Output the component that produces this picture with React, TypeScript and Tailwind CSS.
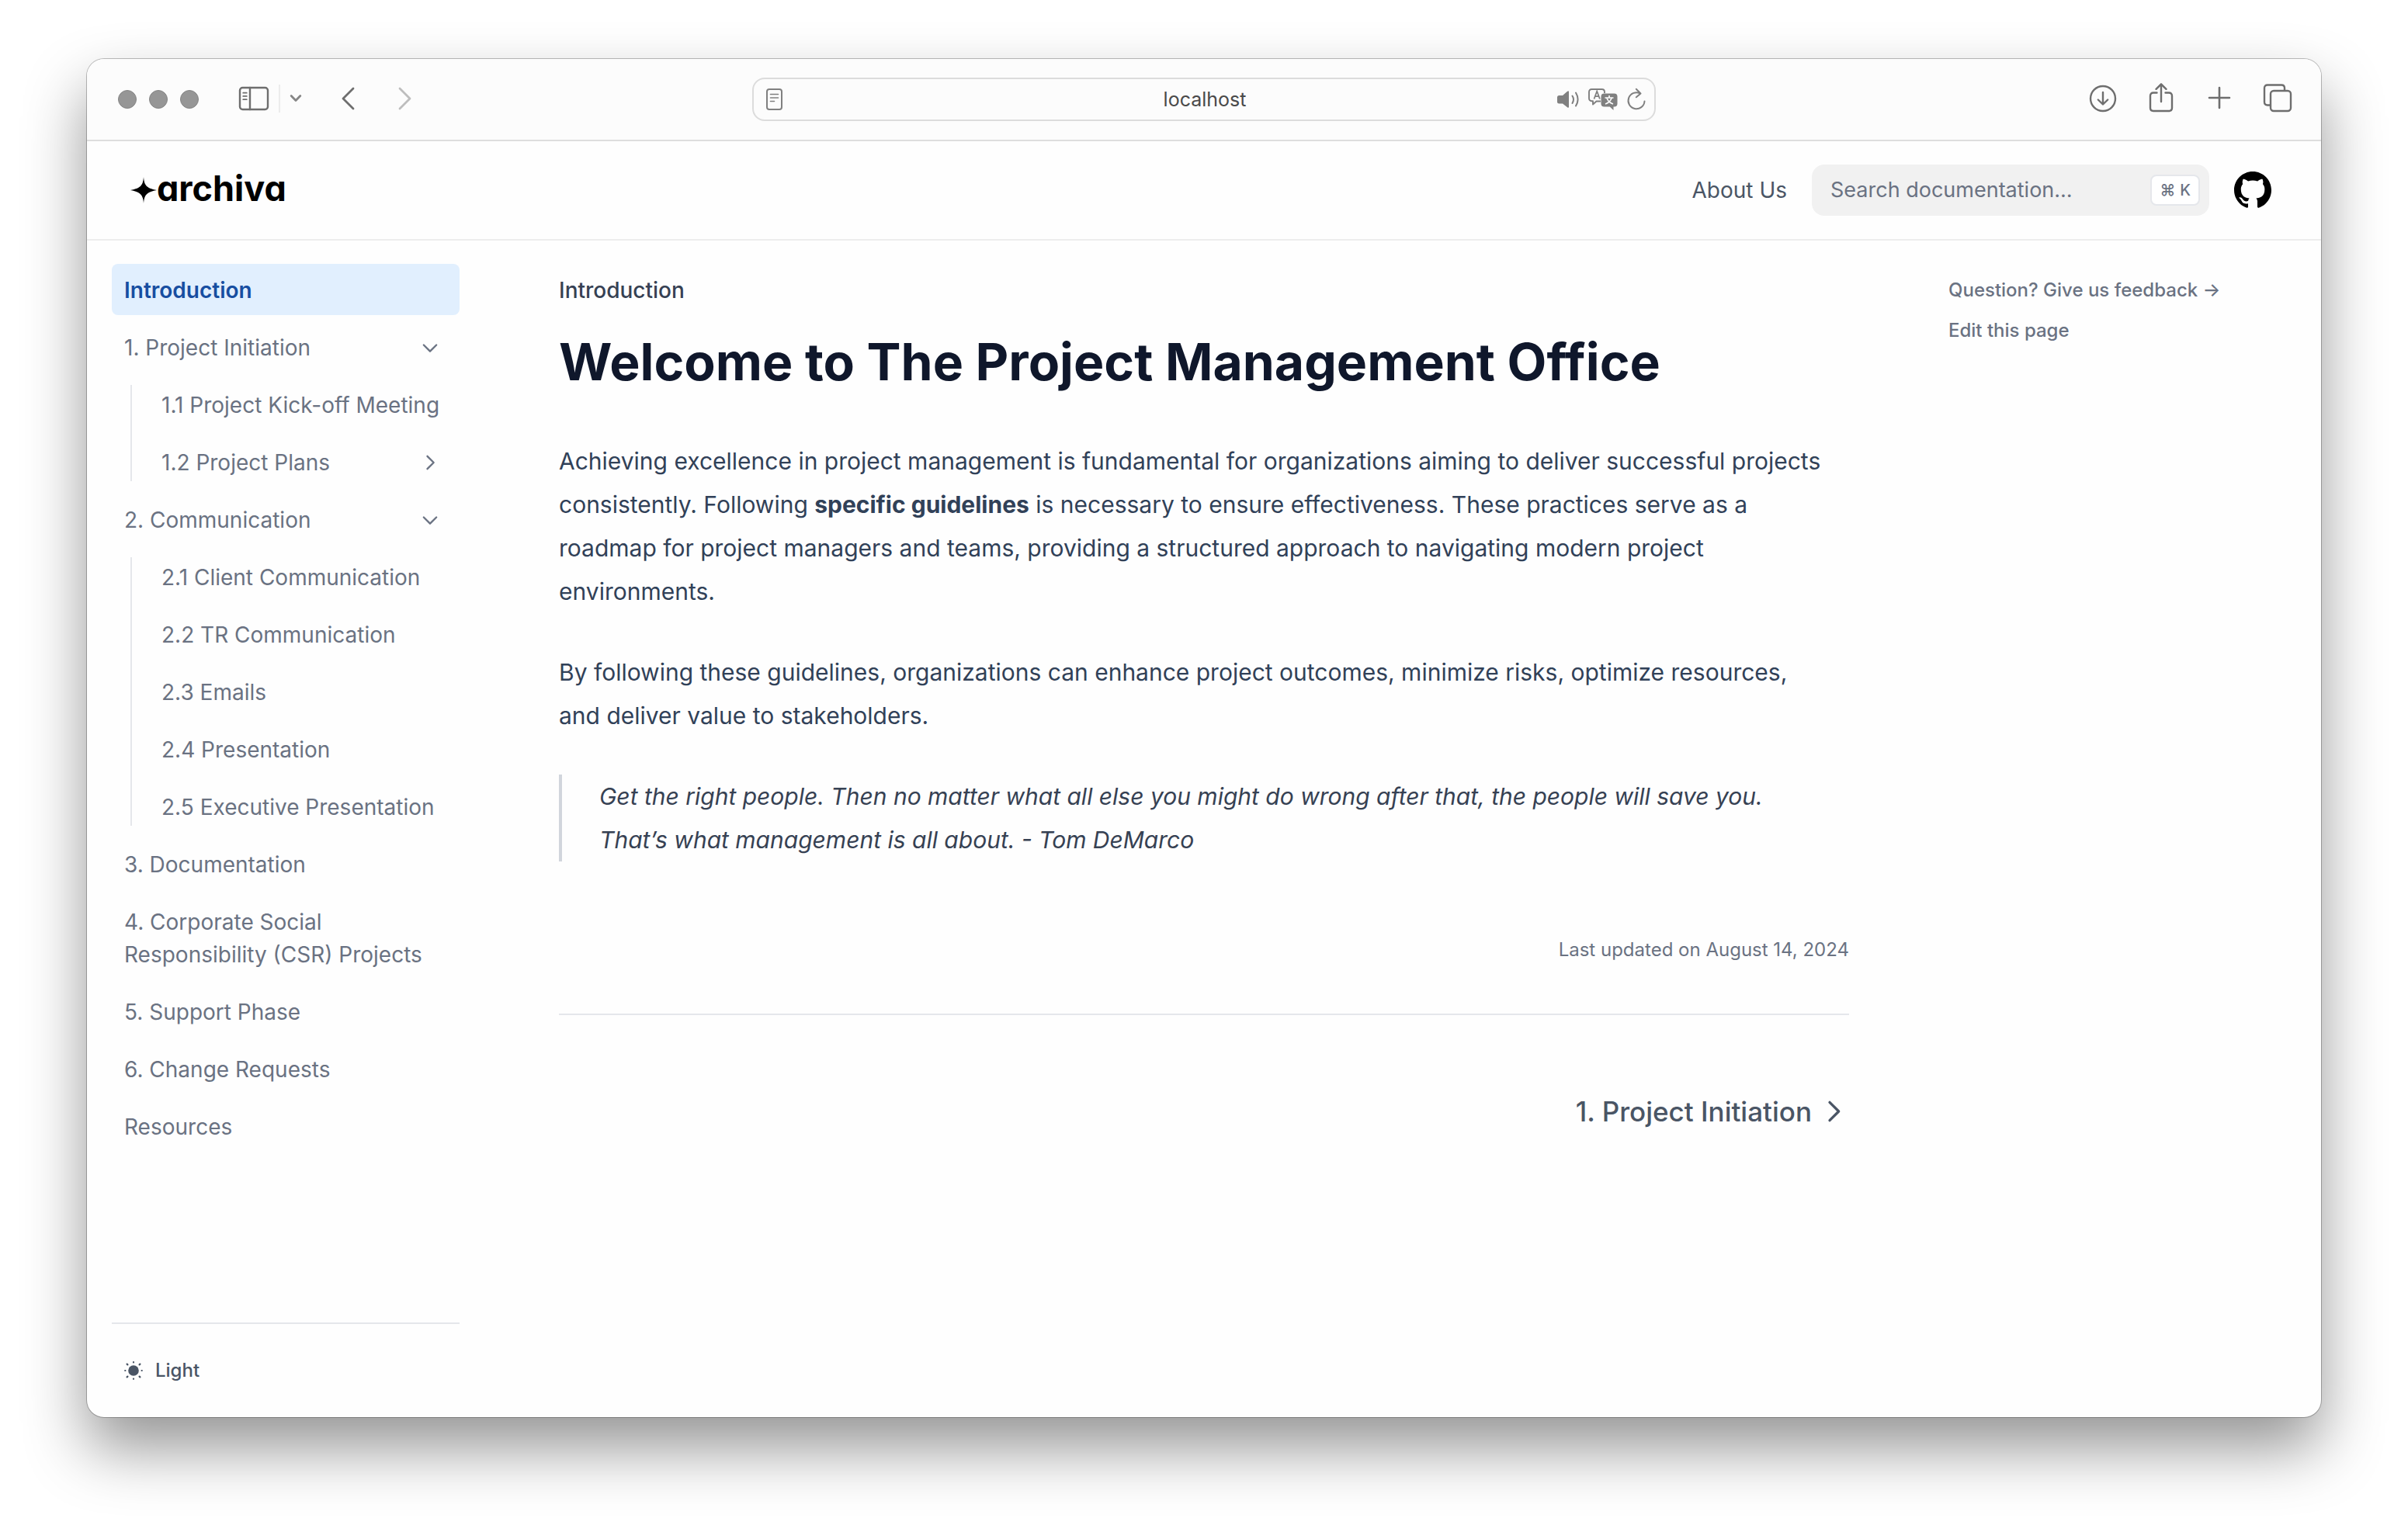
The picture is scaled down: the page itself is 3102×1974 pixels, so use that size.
import React from "react";

type NavItem = { label: string; open?: boolean; closed?: boolean; active?: boolean; children?: NavItem[] };

const NAV: NavItem[] = [
  { label: "Introduction", active: true },
  {
    label: "1. Project Initiation",
    open: true,
    children: [{ label: "1.1 Project Kick-off Meeting" }, { label: "1.2 Project Plans", closed: true }],
  },
  {
    label: "2. Communication",
    open: true,
    children: [
      { label: "2.1 Client Communication" },
      { label: "2.2 TR Communication" },
      { label: "2.3 Emails" },
      { label: "2.4 Presentation" },
      { label: "2.5 Executive Presentation" },
    ],
  },
  { label: "3. Documentation" },
  { label: "4. Corporate Social Responsibility (CSR) Projects" },
  { label: "5. Support Phase" },
  { label: "6. Change Requests" },
  { label: "Resources" },
];

function Chevron({ className }: { className?: string }) {
  return (
    <svg viewBox="0 0 24 24" fill="none" stroke="currentColor" strokeWidth="2" strokeLinecap="round" strokeLinejoin="round" className={className} aria-hidden="true">
      <path d="M9 5l7 7-7 7" />
    </svg>
  );
}

function NavRow({ item }: { item: NavItem }) {
  const expandable = item.open || item.closed;
  return (
    <li className="flex flex-col gap-2">
      <a
        href="#"
        aria-current={item.active ? "page" : undefined}
        className={
          item.active
            ? "flex items-center justify-between rounded-lg bg-[#e1effe] px-4 pt-[13px] pb-[11px] text-[28px] leading-[42px] font-semibold text-[#174ea1]"
            : "flex items-center justify-between rounded-lg pt-[13px] pr-5 pb-[11px] pl-4 text-[28px] leading-[42px] text-gray-500"
        }
      >
        <span className={item.children || item.closed ? "whitespace-nowrap" : ""}>{item.label}</span>
        {expandable && <Chevron className={item.open ? "size-7 m-1 shrink-0 rotate-90" : "size-7 m-1 shrink-0"} />}
      </a>
      {item.children && (
        <ul className="relative ml-12 flex flex-col gap-2 whitespace-nowrap before:absolute before:inset-y-2 before:-left-6 before:w-0.5 before:bg-gray-200">
          {item.children.map((c) => (
            <NavRow key={c.label} item={c} />
          ))}
        </ul>
      )}
    </li>
  );
}

function Toolbar() {
  return (
    <div className="grid h-[106px] grid-cols-[1fr_1164px_1fr] items-center border-b-2 border-[#dedede] bg-[#fcfcfc] text-[#6e6e6e]">
      <div className="flex items-center pl-10">
        <div className="flex gap-4">
          <span className="size-6 rounded-full border border-[#858585] bg-[#969696]" />
          <span className="size-6 rounded-full border border-[#858585] bg-[#969696]" />
          <span className="size-6 rounded-full border border-[#858585] bg-[#969696]" />
        </div>
        <div className="flex items-center pb-0.5">
          <button type="button" aria-label="Show sidebar" className="ml-[51px]">
            <svg width="40" height="32" viewBox="0 0 40 32" fill="none" stroke="currentColor" strokeWidth="2.4" strokeLinecap="round">
              <rect x="2" y="2" width="36" height="28" rx="3.5" />
              <path d="M15 2v28" />
              <path d="M6.2 8.7h4.6M6.2 12.9h4.6M6.2 17.2h4.6" strokeWidth="1.7" />
            </svg>
          </button>
          <span className="ml-3 h-9 w-0.5 bg-[#ececec]" />
          <button type="button" aria-label="Tab groups" className="ml-3 text-[#868686]">
            <svg width="16" height="12" viewBox="0 0 16 12" fill="none" stroke="currentColor" strokeWidth="2.8" strokeLinecap="round" strokeLinejoin="round">
              <path d="M2.2 2.6L8 8.4l5.8-5.8" />
            </svg>
          </button>
          <button type="button" aria-label="Back" className="ml-[50px]">
            <svg width="20" height="32" viewBox="0 0 20 32" fill="none" stroke="currentColor" strokeWidth="2.8" strokeLinecap="round" strokeLinejoin="round">
              <path d="M16 3L3 16l13 13" />
            </svg>
          </button>
          <button type="button" aria-label="Forward" className="ml-[52px] text-[#bdbdbd]">
            <svg width="20" height="32" viewBox="0 0 20 32" fill="none" stroke="currentColor" strokeWidth="2.8" strokeLinecap="round" strokeLinejoin="round">
              <path d="M4 3l13 13L4 29" />
            </svg>
          </button>
        </div>
      </div>

      <div className="flex h-14 items-center rounded-2xl border-2 border-[#dcdcdc] pr-2.5 pl-3 text-[#808080]">
        <svg width="28" height="30" viewBox="0 0 28 30" fill="none" stroke="currentColor" strokeWidth="2" strokeLinecap="round" aria-hidden="true" className="mr-[88px]">
          <rect x="5" y="2" width="19" height="26" rx="3" />
          <path d="M9.5 8.5h10M9.5 13h10M9.5 17.5h5" strokeWidth="1.6" />
        </svg>
        <input aria-label="Address" defaultValue="localhost" className="min-w-0 flex-1 bg-transparent text-center text-[25px] leading-8 text-[#4a4a4a]" />
        <div className="flex items-center gap-2.5">
          <svg width="30" height="28" viewBox="0 0 30 28" fill="none" stroke="currentColor" strokeWidth="2" strokeLinecap="round" aria-hidden="true">
            <path d="M1 11.5q0-2.5 2.5-2.5H8l6-5.300q2-1.400 2 .8v19q0 2.200-2 .8L8 19.500H3.500Q1 19.500 1 17z" fill="currentColor" stroke="none" />
            <path d="M20.500 9.500q3 4.700 0 9.500M25 5.500q5.200 8.500 0 17" />
          </svg>
          <svg width="40" height="30" viewBox="0 0 40 30" aria-hidden="true">
            <path d="M17 17.500h-5.500L7 21.500v-4.200H5.500Q2 17 2 13.500v-8Q2 2 5.500 2h13Q22 2 22 5.500V7" fill="none" stroke="currentColor" strokeWidth="1.9" strokeLinejoin="round" />
            <path d="M8.500 14.500l3.700-10 3.700 10M9.800 11.200h4.800" fill="none" stroke="currentColor" strokeWidth="1.8" />
            <path d="M21.500 7.500h13q4 0 4 4v9q0 4-4 4h-1V29l-4.800-4.500h-7.200q-4 0-4-4v-9q0-4 4-4z" fill="currentColor" />
            <path d="M28 10v2.500M22.500 13h11M31 13.500q-2 5.500-8 7.500M25 13.500q2 5.500 8 7.500" fill="none" stroke="#fcfcfc" strokeWidth="1.7" />
          </svg>
          <button type="button" aria-label="Reload">
            <svg width="26" height="30" viewBox="0 0 26 30" fill="none" stroke="currentColor" strokeWidth="2" strokeLinecap="round" strokeLinejoin="round">
              <path d="M23.500 17.500A10.500 10.500 0 1 1 18 7.500M12.800 1.800L18.500 7.500l-5.700 4.800" />
            </svg>
          </button>
        </div>
      </div>

      <div className="flex items-center justify-end gap-[37px] pr-[37px] pb-1">
        <button type="button" aria-label="Downloads">
          <svg width="38" height="38" viewBox="0 0 38 38" fill="none" stroke="currentColor" strokeWidth="2.4" strokeLinecap="round" strokeLinejoin="round">
            <circle cx="19" cy="20" r="16" />
            <path d="M19 12v15M12.800 21.500l6.200 6 6.200-6" />
          </svg>
        </button>
        <button type="button" aria-label="Share">
          <svg width="38" height="42" viewBox="0 0 38 42" fill="none" stroke="currentColor" strokeWidth="2.4" strokeLinecap="round" strokeLinejoin="round">
            <path d="M13.500 14.500H9q-4 0-4 4V34q0 4 4 4h20q4 0 4-4V18.500q0-4-4-4h-4.500" />
            <path d="M19 26V3.500M12.500 9.800L19 3.300l6.500 6.500" />
          </svg>
        </button>
        <button type="button" aria-label="New tab">
          <svg width="38" height="38" viewBox="0 0 38 38" fill="none" stroke="currentColor" strokeWidth="2.6" strokeLinecap="round">
            <path d="M19 6v26M6 19h26" />
          </svg>
        </button>
        <button type="button" aria-label="Tab overview">
          <svg width="38" height="40" viewBox="0 0 38 40" fill="none" stroke="currentColor" strokeWidth="2.4" strokeLinejoin="round">
            <rect x="10" y="11" width="26" height="26" rx="4" />
            <path d="M9.500 29.500H6q-4 0-4-4V7.500q0-4 4-4h18q4 0 4 4V11" />
          </svg>
        </button>
      </div>
    </div>
  );
}

function SiteHeader() {
  return (
    <header className="flex h-32 items-center border-b-2 border-[#ededed] px-12">
      <a href="#" className="mr-auto flex items-center pl-2 text-black">
        <svg width="34" height="36" viewBox="0 0 36 36" fill="currentColor" aria-hidden="true">
          <path d="M18 0C18.700 10 21 15.500 36 18 21 20.500 18.700 26 18 36 17.300 26 15 20.500 0 18 15 15.500 17.300 10 18 0z" />
        </svg>
        <span className="pb-1 text-[45px] leading-[52px] font-bold [font-feature-settings:'cv11']">archiva</span>
      </a>
      <a href="#" className="mr-8 text-[28px] leading-10 text-gray-600">
        About Us
      </a>
      <div className="flex h-[66px] w-[512px] items-center rounded-2xl bg-[#f1f1f1] pr-3 pl-6">
        <input
          type="search"
          aria-label="Search documentation"
          placeholder="Search documentation…"
          className="min-w-0 flex-1 bg-transparent text-[27px] leading-10 placeholder:text-gray-500"
        />
        <kbd className="flex h-10 items-center gap-1.5 rounded-lg border-2 border-gray-200 bg-white px-2.5 font-[Inter] text-[20px] leading-6 font-medium text-gray-500">
          <span>⌘</span>
          <span>K</span>
        </kbd>
      </div>
      <a href="#" aria-label="GitHub" className="ml-4 p-4 text-black">
        <svg width="48" height="48" viewBox="3 3 18 18" fill="currentColor">
          <path d="M12 3C7.030 3 3 7.030 3 12C3 15.981 5.578 19.344 9.154 20.536C9.604 20.615 9.773 20.345 9.773 20.109C9.773 19.895 9.761 19.186 9.761 18.432C7.500 18.848 6.915 17.881 6.735 17.374C6.634 17.115 6.195 16.316 5.813 16.102C5.498 15.934 5.048 15.517 5.801 15.506C6.510 15.495 7.016 16.159 7.185 16.429C7.995 17.790 9.289 17.407 9.806 17.171C9.885 16.586 10.121 16.192 10.380 15.967C8.378 15.742 6.285 14.966 6.285 11.524C6.285 10.545 6.634 9.735 7.207 9.105C7.117 8.880 6.802 7.957 7.297 6.720C7.297 6.720 8.051 6.484 9.773 7.642C10.493 7.440 11.258 7.339 12.023 7.339C12.788 7.339 13.553 7.440 14.273 7.642C15.994 6.472 16.747 6.720 16.747 6.720C17.242 7.957 16.927 8.880 16.837 9.105C17.411 9.735 17.760 10.534 17.760 11.524C17.760 14.977 15.656 15.742 13.654 15.967C13.980 16.249 14.261 16.789 14.261 17.632C14.261 18.836 14.250 19.804 14.250 20.109C14.250 20.345 14.419 20.626 14.869 20.536C18.422 19.344 21 15.970 21 12C21 7.030 16.970 3 12 3Z" />
        </svg>
      </a>
    </header>
  );
}

export default function App() {
  return (
    <div className="flex min-h-screen bg-white px-28 pt-[76px] pb-[148px] font-[Inter,sans-serif]">
      <div className="flex min-w-0 flex-1 flex-col overflow-hidden rounded-[22px] bg-[#fefefe] shadow-[0_0_0_1px_rgba(0,0,0,0.25),0_40px_80px_rgba(0,0,0,0.42)]">
        <Toolbar />
        <SiteHeader />
        <div className="flex flex-1">
          <aside className="flex w-[512px] shrink-0 flex-col px-8 pt-[30px]">
            <nav aria-label="Documentation">
              <ul className="flex flex-col gap-2">
                {NAV.map((item) => (
                  <NavRow key={item.label} item={item} />
                ))}
              </ul>
            </nav>
            <div className="mt-auto border-t-2 border-gray-200 px-4 pt-10 pb-10">
              <button type="button" className="flex items-center gap-4 text-[24px] leading-10 font-medium text-gray-600">
                <svg width="24" height="24" viewBox="0 0 24 24" fill="currentColor" stroke="currentColor" strokeWidth="2.2" strokeLinecap="round" aria-hidden="true">
                  <circle cx="12" cy="12" r="6.8" stroke="none" />
                  <path d="M12 1.200v.2M12 22.600v.2M1.200 12h.2M22.600 12h.2M3.600 3.600l.8.8M19.600 19.600l.8.8M3.600 20.400l.8-.8M19.600 4.400l.8-.8" />
                </svg>
                Light
              </button>
            </div>
          </aside>

          <main className="min-w-0 flex-1 px-24 pt-11">
            <p className="text-[28px] leading-10 font-medium text-gray-700">Introduction</p>
            <h1 className="mt-8 text-[66px] leading-20 font-bold whitespace-nowrap text-slate-900">Welcome to The Project Management Office</h1>
            <p className="mt-[60px] text-[30px] leading-14 text-slate-700">
              Achieving excellence in project management is fundamental for organizations aiming to deliver successful projects
              consistently. Following <strong className="font-bold">specific guidelines</strong> is necessary to ensure
              effectiveness. These practices serve as a roadmap for project managers and teams, providing a structured approach to
              navigating modern project environments.
            </p>
            <p className="mt-12 text-[30px] leading-14 text-slate-700">
              By following these guidelines, organizations can enhance project outcomes, minimize risks, optimize resources,
              <br />
              and deliver value to stakeholders.
            </p>
            <blockquote className="mt-12 border-l-4 border-gray-300 pl-12 text-[30px] leading-14 text-gray-700 italic">
              Get the right people. Then no matter what all else you might do wrong after that, the people will save you.
              <br />
              That’s what management is all about. - Tom DeMarco
            </blockquote>
            <p className="mt-24 text-right text-[24px] leading-9 text-gray-500">Last updated on August 14, 2024</p>
            <nav aria-label="Pagination" className="mt-16 flex justify-end border-t-2 border-gray-200 pt-24">
              <a href="#" className="flex items-center gap-2 text-[35px] leading-[56px] font-medium text-gray-600">
                1. Project Initiation
                <Chevron className="size-10" />
              </a>
            </nav>
          </main>

          <aside className="flex w-[512px] shrink-0 flex-col items-start gap-4 px-8 pt-[46px] text-[24px] leading-9 font-medium text-gray-500">
            <a href="#">Question? Give us feedback →</a>
            <a href="#">Edit this page</a>
          </aside>
        </div>
      </div>
    </div>
  );
}
